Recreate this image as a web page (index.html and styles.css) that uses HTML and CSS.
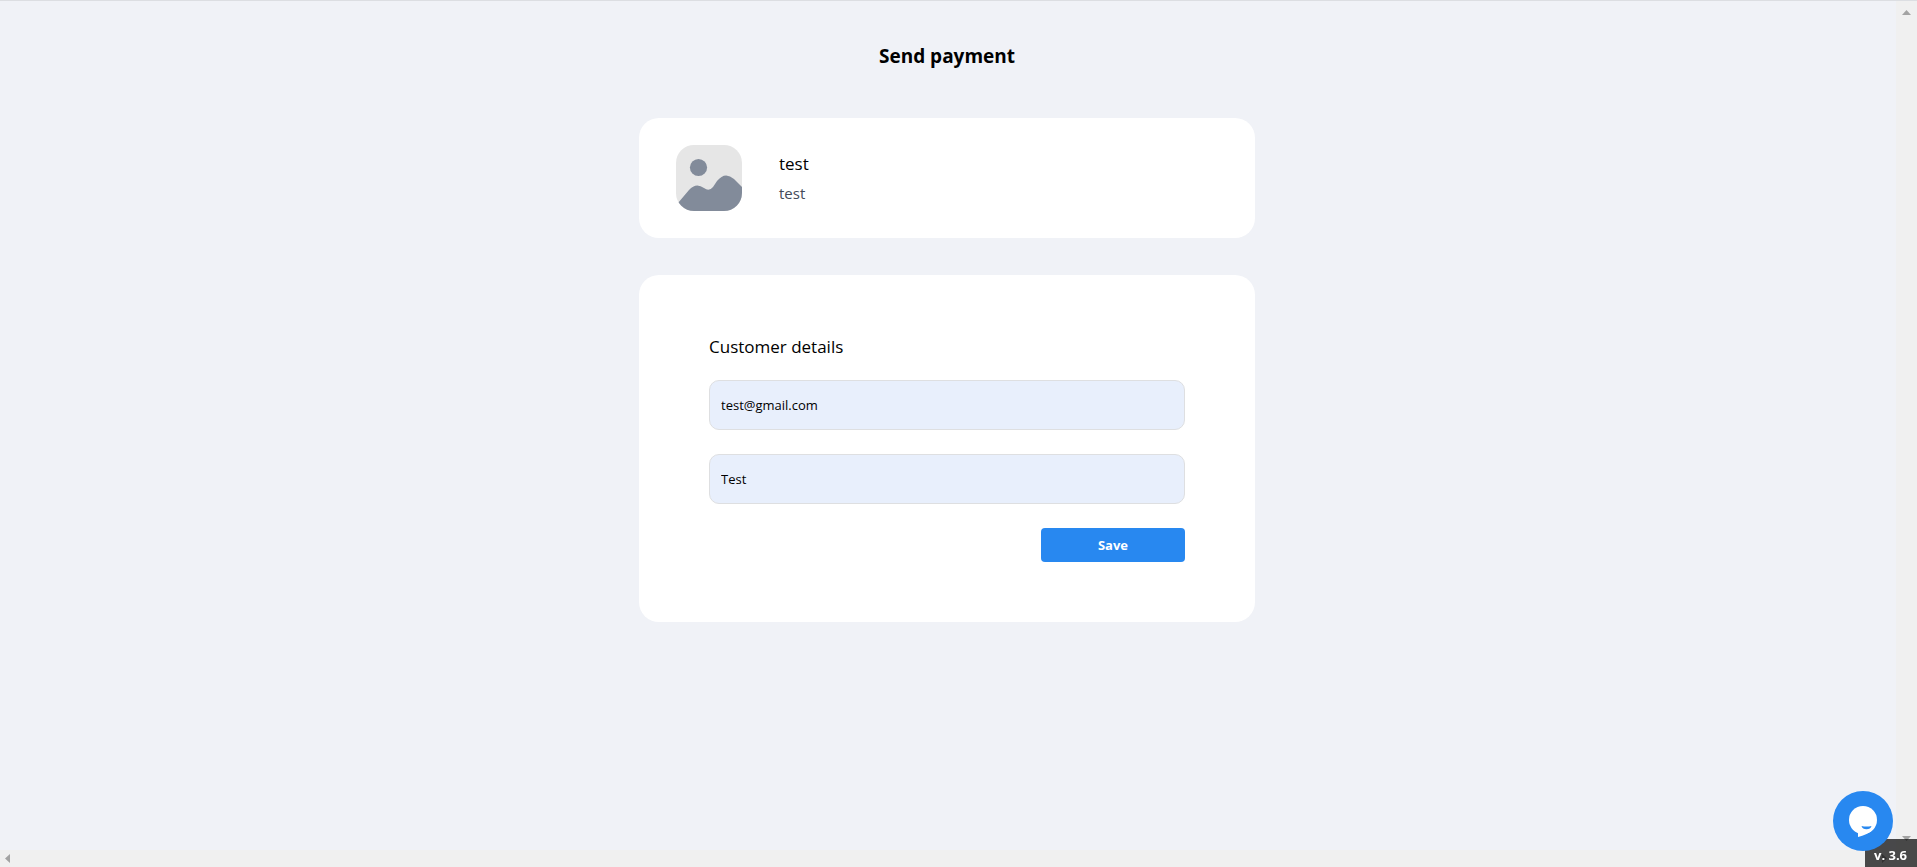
FILE: index.html
```html
<!DOCTYPE html>
<html lang="en">
<head>
<meta charset="utf-8">
<title>Send payment</title>
<link rel="stylesheet" href="styles.css">
</head>
<body>
<div class="frame">
  <main class="page">
    <h1 class="title">Send payment</h1>
    <section class="card product">
      <svg class="thumb" viewBox="0 0 66 66" aria-hidden="true">
        <defs><clipPath id="round"><rect width="66" height="66" rx="18"/></clipPath></defs>
        <g clip-path="url(#round)">
          <rect width="66" height="66" fill="#e6e6e6"/>
          <circle cx="22.500" cy="22.500" r="8.600" fill="#828b9a"/>
          <path d="M2 58L13 45Q20 37 28 43Q33 47 37 42L41 36Q49 26 58 34L66 42V66H2Z" fill="#828b9a"/>
        </g>
      </svg>
      <div class="product-text">
        <p class="product-name">test</p>
        <p class="product-note">test</p>
      </div>
    </section>
    <form class="card details">
      <h2 class="subtitle">Customer details</h2>
      <input class="field" type="email" aria-label="Email" value="test@gmail.com">
      <input class="field" type="text" aria-label="Name" value="Test">
      <button class="save" type="button">Save</button>
    </form>
  </main>
  <div class="track-v">
    <svg width="9" height="5" viewBox="0 0 9 5" aria-hidden="true"><path d="M0 5L4.500 0L9 5Z" fill="#a3a3a3"/></svg>
    <svg width="9" height="5" viewBox="0 0 9 5" aria-hidden="true"><path d="M0 0L4.500 5L9 0Z" fill="#a3a3a3"/></svg>
  </div>
  <div class="track-h">
    <svg width="5" height="9" viewBox="0 0 5 9" aria-hidden="true"><path d="M5 0L0 4.500L5 9Z" fill="#a3a3a3"/></svg>
    <svg width="5" height="9" viewBox="0 0 5 9" aria-hidden="true"><path d="M0 0L5 4.500L0 9Z" fill="#a3a3a3"/></svg>
  </div>
</div>
<div class="version">v. 3.6</div>
<button class="chat" type="button" aria-label="Open chat">
  <svg width="60" height="60" viewBox="0 0 60 60" aria-hidden="true">
    <circle cx="30" cy="29" r="14" fill="#fff"/>
    <path d="M25 40V46Q34 43.500 39 39.500Z" fill="#fff"/>
    <path d="M28.500 35Q33.500 36.200 38.500 35Q37.500 38.300 33.500 38.300Q29.500 38.300 28.500 35Z" fill="#2888f0"/>
  </svg>
</button>
</body>
</html>
```
FILE: styles.css
```css
* { box-sizing: border-box; }
body {
  margin: 0;
  background: #f0f2f7;
  color: #000;
  font-family: "Segoe UI", "Open Sans", "Noto Sans", sans-serif;
}
h1, h2, p { margin: 0; }
.frame {
  display: grid;
  grid-template-columns: 1fr 21px;
  grid-template-rows: 1fr 17px;
  height: 100vh;
  border-top: 1px solid #dcdee2;
}
.page {
  display: flex;
  flex-direction: column;
  align-items: center;
  padding: 40px 22px 40px 20px;
}
.title {
  font-size: 19px;
  line-height: 30px;
  font-weight: 700;
  margin-bottom: 47px;
}
.card {
  width: 100%;
  max-width: 616px;
  background: #fff;
  border-radius: 20px;
}
.product {
  display: flex;
  align-items: center;
  gap: 37px;
  padding: 27px 37px;
  margin-bottom: 37px;
}
.thumb { width: 66px; height: 66px; }
.product-name { font-size: 17px; line-height: 30px; }
.product-note { font-size: 15px; line-height: 28px; color: #444b59; }
.details {
  display: flex;
  flex-direction: column;
  gap: 24px;
  padding: 59px 70px 60px;
}
.subtitle {
  font-size: 17px;
  line-height: 26px;
  font-weight: 400;
  margin-bottom: -4px;
}
.field {
  width: 100%;
  height: 50px;
  padding: 0 11px;
  border: 1px solid #dedfe1;
  border-radius: 10px;
  background: #e8effc;
  color: #000;
  font: 13px "Segoe UI", "Open Sans", "Noto Sans", sans-serif;
}
.save {
  align-self: flex-end;
  width: 144px;
  height: 34px;
  border: 0;
  border-radius: 4px;
  background: #2888f0;
  color: #fff;
  font: 700 13px "Segoe UI", "Open Sans", "Noto Sans", sans-serif;
}
.track-v, .track-h {
  display: flex;
  justify-content: space-between;
  align-items: center;
  background: #f0f0f0;
}
.track-v { flex-direction: column; padding: 9px 0; }
.track-h { grid-column: 1 / -1; padding: 0 30px 0 5px; }
.version {
  position: fixed;
  right: 0;
  bottom: 0;
  width: 52px;
  height: 28px;
  padding-left: 9px;
  background: rgba(0, 0, 0, 0.7);
  color: #fff;
  font-size: 13px;
  line-height: 32px;
  font-weight: 700;
}
.chat {
  position: fixed;
  right: 24px;
  bottom: 16px;
  width: 60px;
  height: 60px;
  padding: 0;
  border: 0;
  border-radius: 50%;
  background: #2888f0;
}
.chat svg { display: block; }
```
